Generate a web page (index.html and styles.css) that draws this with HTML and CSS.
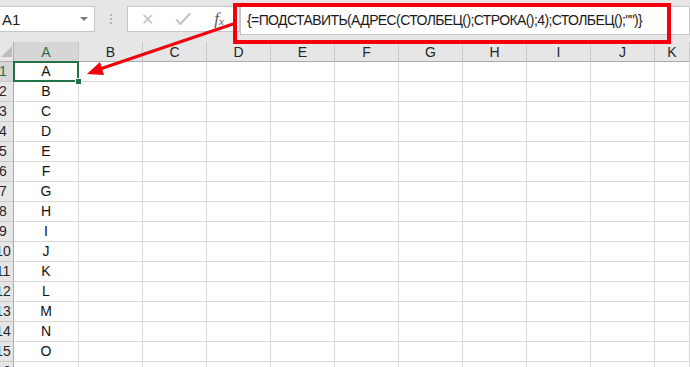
FILE: index.html
```html
<!DOCTYPE html>
<html>
<head>
    <title>Excel - ПОДСТАВИТЬ</title>
    <link rel="stylesheet" href="styles.css">
</head>
<body>
    <div class="bar">
        <div class="namebox">
            <span>A1</span>
            <span class="drop"></span>
        </div>
        <div class="dots"><i></i><i></i><i></i></div>
        <div class="buttons">
            <span class="btn cancel">&#x2715;</span>
            <span class="btn enter">
                <svg width="16" height="14" viewBox="0 0 16 14"><path d="M1 7.5 L5.5 12 L15 1.5" fill="none" stroke="#c4c4c4" stroke-width="2"/></svg>
            </span>
            <span class="btn fx">f<sub>x</sub></span>
        </div>
        <div class="formula">{=ПОДСТАВИТЬ(АДРЕС(СТОЛБЕЦ();СТРОКА();4);СТОЛБЕЦ();"")}</div>
    </div>

    <div class="sheet">
        <div class="corner"><svg width="14" height="20" viewBox="0 0 14 20"><polygon points="12,4 12,15 1,15" fill="#bdbdbd"/></svg></div>
        <div class="colhead sel">A</div>
        <div class="colhead">B</div>
        <div class="colhead">C</div>
        <div class="colhead">D</div>
        <div class="colhead">E</div>
        <div class="colhead">F</div>
        <div class="colhead">G</div>
        <div class="colhead">H</div>
        <div class="colhead">I</div>
        <div class="colhead">J</div>
        <div class="colhead">K</div>
    </div>

    <div class="overlay">
        <div class="redbox"></div>
        <svg class="arrow" width="690" height="367" viewBox="0 0 690 367">
            <line x1="236" y1="23" x2="100" y2="69" stroke="#f2000c" stroke-width="3"/>
            <polygon points="87,74 104,75 100,62" fill="#f2000c"/>
        </svg>
    </div>

    <script>
        // fill the rows of the sheet
        var sheet = document.querySelector('.sheet');
        var letters = 'ABCDEFGHIJKLMNO';
        for (var r = 1; r <= 16; r++) {
            var head = document.createElement('div');
            head.className = 'rowhead' + (r === 1 ? ' sel' : '');
            head.innerHTML = '<span>' + r + '</span>';
            sheet.appendChild(head);
            for (var c = 0; c < 11; c++) {
                var cell = document.createElement('div');
                cell.className = 'cell';
                if (c === 0 && r <= 15) cell.textContent = letters[r - 1];
                if (c === 0 && r === 1) cell.className = 'cell active';
                sheet.appendChild(cell);
            }
        }
    </script>
</body>
</html>
```

FILE: styles.css
```css
body {
    margin: 0;
    width: 690px;
    height: 367px;
    overflow: hidden;
    background: #fff;
    font-family: "Liberation Sans", Arial, sans-serif;
    position: relative;
}
.bar {
    height: 42px;
    background: #e6e6e6;
    display: flex;
    align-items: flex-start;
    box-sizing: border-box;
    padding-top: 6px;
}
.namebox {
    width: 95px;
    height: 26px;
    background: #fff;
    border: 1px solid #c6c6c6;
    border-left: none;
    box-sizing: border-box;
    display: flex;
    align-items: center;
    justify-content: space-between;
    padding: 0 6px 0 2px;
    font-size: 15px;
    color: #1e1e1e;
}
.drop {
    width: 0;
    height: 0;
    border-left: 4px solid transparent;
    border-right: 4px solid transparent;
    border-top: 4px solid #7a7a7a;
}
.dots {
    width: 32px;
    display: flex;
    flex-direction: column;
    align-items: center;
    gap: 2px;
    padding-top: 8px;
}
.dots i {
    width: 2px;
    height: 2px;
    background: #b4b4b4;
}
.buttons {
    width: 113px;
    height: 26px;
    background: #fff;
    border: 1px solid #c6c6c6;
    box-sizing: border-box;
    display: flex;
    align-items: center;
}
.btn {
    width: 36px;
    text-align: center;
    color: #c4c4c4;
}
.cancel {
    font-size: 16px;
    margin-left: 1px;
}
.enter svg {
    display: block;
    margin: 0 auto;
}
.fx {
    font-family: "Liberation Serif", serif;
    font-style: italic;
    font-size: 17px;
    color: #5a5a5a;
}
.fx sub {
    font-size: 11px;
    vertical-align: -1px;
}
.formula {
    flex: 1;
    height: 29px;
    background: #fff;
    border: 1px solid #c6c6c6;
    box-sizing: border-box;
    padding: 5px 0 0 6px;
    font-size: 14px;
    letter-spacing: -0.6px;
    color: #1a1a1a;
    white-space: nowrap;
}
.sheet {
    display: grid;
    grid-template-columns: 14px 65px repeat(9, 64px) 1fr;
    grid-template-rows: repeat(17, 20px);
    font-size: 14px;
    color: #111;
}
.corner {
    background: #e6e6e6;
    border-right: 1px solid #ababab;
    border-bottom: 1px solid #ababab;
    box-sizing: border-box;
    overflow: hidden;
}
.corner svg {
    display: block;
}
.colhead {
    background: #e6e6e6;
    border-right: 1px solid #c8c8c8;
    border-bottom: 1px solid #ababab;
    box-sizing: border-box;
    text-align: center;
    line-height: 20px;
    color: #262626;
}
.colhead.sel, .rowhead.sel {
    background: #d6d6d6;
    color: #217346;
}
.rowhead {
    background: #e6e6e6;
    border-right: 1px solid #ababab;
    border-bottom: 1px solid #c8c8c8;
    box-sizing: border-box;
    overflow: hidden;
    line-height: 19px;
    color: #262626;
}
.rowhead span {
    display: block;
    width: 24px;
    margin-left: -9px;
    text-align: center;
}
.cell {
    border-right: 1px solid #d9d9d9;
    border-bottom: 1px solid #d9d9d9;
    box-sizing: border-box;
    text-align: center;
    line-height: 19px;
    position: relative;
}
.cell.active::after {
    content: "";
    position: absolute;
    left: -1px;
    top: -1px;
    right: -1px;
    bottom: -1px;
    border: 2px solid #217346;
}
.cell.active::before {
    content: "";
    position: absolute;
    right: -4px;
    bottom: -4px;
    width: 5px;
    height: 5px;
    background: #217346;
    border: 1px solid #fff;
    z-index: 1;
}
.overlay {
    position: absolute;
    left: 0;
    top: 0;
    width: 690px;
    height: 367px;
    pointer-events: none;
}
.redbox {
    position: absolute;
    left: 233px;
    top: 3px;
    width: 438px;
    height: 41px;
    border: 4px solid #f2000c;
    box-sizing: border-box;
}
.arrow {
    position: absolute;
    left: 0;
    top: 0;
}
```
